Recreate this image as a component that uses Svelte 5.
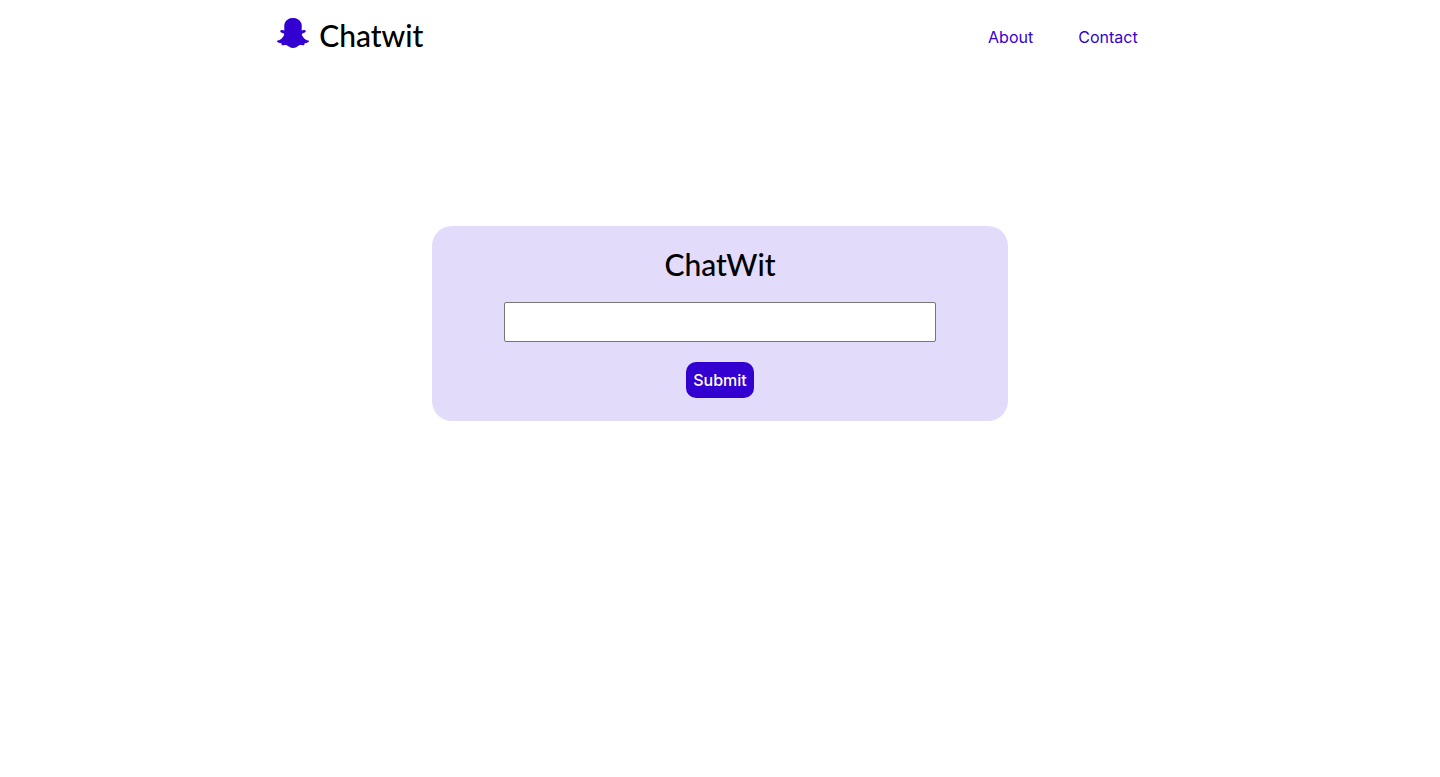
<script>
  let message = $state('');
</script>

<header>
  <a class="brand" href="#home">
    <svg viewBox="0 0 512 512" aria-hidden="true">
      <path d="M510.846 392.673c-5.211 12.157-27.239 21.089-67.36 27.318-2.064 2.786-3.775 14.686-6.507 23.956-1.625 5.566-5.623 8.869-12.128 8.869l-.297-.005c-9.395 0-19.203-4.323-38.852-4.323-26.521 0-35.662 6.043-56.254 20.588-21.832 15.438-42.771 28.764-74.027 27.399-31.646 2.334-58.025-16.908-72.871-27.404-20.714-14.643-29.828-20.582-56.241-20.582-18.864 0-30.736 4.72-38.852 4.72-8.073 0-11.213-4.922-12.422-9.04-2.703-9.189-4.404-21.263-6.523-24.13-20.679-3.209-67.31-11.344-68.498-32.15a10.627 10.627 0 0 1 8.877-11.069c69.583-11.455 100.924-82.901 102.227-85.934.074-.176.155-.344.237-.515 3.713-7.537 4.544-13.849 2.463-18.753-5.05-11.896-26.872-16.164-36.053-19.796-23.715-9.366-27.015-20.128-25.612-27.504 2.437-12.836 21.725-20.735 33.002-15.453 8.919 4.181 16.843 6.297 23.547 6.297 5.022 0 8.212-1.204 9.96-2.171-2.043-35.936-7.101-87.29 5.687-115.969C158.122 21.304 229.705 15.42 250.826 15.42c.944 0 9.141-.089 10.11-.089 52.148 0 102.254 26.78 126.723 81.643 12.777 28.65 7.749 79.792 5.695 116.009 1.582.872 4.357 1.942 8.599 2.139 6.397-.286 13.815-2.389 22.069-6.257 6.085-2.846 14.406-2.461 20.48.058l.029.01c9.476 3.385 15.439 10.215 15.589 17.87.184 9.747-8.522 18.165-25.878 25.018-2.118.835-4.694 1.655-7.434 2.525-9.797 3.106-24.6 7.805-28.616 17.271-2.079 4.904-1.256 11.211 2.46 18.748.087.168.166.342.239.515 1.301 3.03 32.615 74.46 102.23 85.934 6.427 1.058 11.163 7.877 7.725 15.859z" />
    </svg>
    <span>Chatwit</span>
  </a>
  <nav>
    <a href="#about">About</a>
    <a href="#contact">Contact</a>
  </nav>
</header>

<main>
  <form onsubmit={(event) => event.preventDefault()}>
    <h1><label for="message">ChatWit</label></h1>
    <input id="message" type="text" bind:value={message} />
    <button type="submit">Submit</button>
  </form>
</main>

<style>
  :global(body) {
    margin: 0;
    background: #fff;
    font-family: Inter, sans-serif;
    font-size: 16px;
  }

  header {
    display: flex;
    align-items: center;
    justify-content: space-between;
    padding: 17px 21% 15px 19.25%;
  }

  .brand {
    display: flex;
    align-items: flex-start;
    gap: 10px;
    color: #000;
    text-decoration: none;
  }

  .brand svg {
    width: 32px;
    height: 32px;
    margin-bottom: 8px;
    fill: #3300d1;
  }

  .brand span,
  h1 {
    font-family: "Gill Sans", Lato, sans-serif;
    font-size: 30px;
    font-weight: 500;
    line-height: 36px;
  }

  nav {
    display: flex;
    gap: 45px;
  }

  nav a {
    color: #3300d1;
    line-height: 20px;
    text-decoration: none;
  }

  main {
    display: flex;
    justify-content: center;
    padding-top: 154px;
  }

  form {
    box-sizing: border-box;
    display: flex;
    flex-direction: column;
    align-items: center;
    gap: 20px;
    width: 40%;
    padding: 20px 0 23px;
    border-radius: 20px;
    background: #e2dbfa;
  }

  h1 {
    margin: 0;
  }

  input {
    box-sizing: border-box;
    width: 75%;
    height: 40px;
    padding: 0 8px;
    border: 1px solid #767676;
    border-radius: 2px;
    background: #fff;
    font: inherit;
  }

  button {
    padding: 8px 7px;
    border: 0;
    border-radius: 10px;
    background: #3300d1;
    color: #fff;
    font: inherit;
    font-weight: 500;
    line-height: 20px;
  }
</style>
